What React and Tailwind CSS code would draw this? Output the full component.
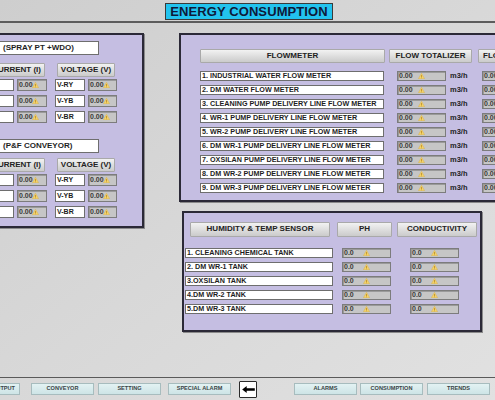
import React from "react";

const font = { fontFamily: '"Liberation Sans", Arial, sans-serif' };

const Warn = ({ className = "" }) => (
  <svg viewBox="0 0 10 9" className={`w-[7px] h-[6px] shrink-0 ${className}`}>
    <polygon points="5,0.5 9.6,8.6 0.4,8.6" fill="#f3d46a" stroke="#d9a93a" strokeWidth="0.6" />
    <rect x="4.5" y="3" width="1" height="3.2" fill="#b07a1a" />
    <rect x="4.5" y="6.8" width="1" height="1" fill="#b07a1a" />
  </svg>
);

const Value = ({ text = "0.00", w = "w-[49px]", gap = "w-[20px]" }) => (
  <div
    className={`${w} h-[10px] shrink-0 flex items-center bg-[#c6c6c6] border border-[#7c7c7c] shadow-[inset_1px_1px_0_#9a9a9a] overflow-hidden`}
  >
    <span className={`${gap} pl-[1px] text-[7px] leading-none font-bold text-[#3a3a3a] shrink-0`}>{text}</span>
    <Warn />
  </div>
);

const Label = ({ children, className = "" }) => (
  <div
    className={`shrink-0 flex items-center bg-white border border-[#6e6e6e] pl-[1px] text-[7.2px] leading-none font-bold text-[#1e1e1e] whitespace-nowrap overflow-hidden ${className}`}
  >
    {children}
  </div>
);

const Head = ({ children, className = "" }) => (
  <div
    className={`shrink-0 flex items-center justify-center bg-gradient-to-b from-[#f2f2f2] to-[#cbcbcb] border border-[#a9a9a9] rounded-[1px] text-[8px] leading-none font-bold text-[#222] whitespace-nowrap overflow-hidden ${className}`}
  >
    {children}
  </div>
);

const panel = "shrink-0 bg-[#c5bee2] border-2 border-[#2b2937] shadow-[1px_1px_0_#8a8a8a]";

function MotorBlock({ title, first }) {
  const rows = [
    ["I-R", "V-RY"],
    ["I-Y", "V-YB"],
    ["I-B", "V-BR"],
  ];
  return (
    <div className={first ? "mt-[6px]" : "mt-[16px]"}>
      <Label className="w-[119px] h-[14px] text-[8px] pl-[22px]">{title}</Label>
      <div className={`flex ${first ? "mt-[8px]" : "mt-[5px]"}`}>
        <Head className="w-[65px] h-[14px] justify-end pr-[3px]">CURRENT (I)</Head>
        <Head className="w-[58px] h-[14px] ml-[12px]">VOLTAGE (V)</Head>
      </div>
      <div className="flex flex-col gap-[4px] mt-[2px]">
        {rows.map(([a, b]) => (
          <div key={b} className="flex items-center h-[12px]">
            <Label className="w-[34px] h-[12px] text-[7px]">{a}</Label>
            <Value w="w-[30px] h-[12px] ml-[3px]" gap="w-[14px]" />
            <Label className="w-[30px] h-[12px] ml-[8px] text-[7px]">{b}</Label>
            <Value w="w-[29px] h-[12px] ml-[3px]" gap="w-[14px]" />
          </div>
        ))}
      </div>
    </div>
  );
}

const flowRows = [
  "1. INDUSTRIAL WATER FLOW METER",
  "2. DM WATER FLOW METER",
  "3. CLEANING PUMP DELIVERY LINE FLOW METER",
  "4. WR-1 PUMP DELIVERY LINE FLOW METER",
  "5. WR-2 PUMP DELIVERY LINE FLOW METER",
  "6. DM WR-1 PUMP DELIVERY LINE FLOW METER",
  "7. OXSILAN PUMP DELIVERY LINE FLOW METER",
  "8. DM WR-2 PUMP DELIVERY LINE FLOW METER",
  "9. DM WR-3 PUMP DELIVERY LINE FLOW METER",
];

const tankRows = [
  "1. CLEANING CHEMICAL TANK",
  "2. DM WR-1 TANK",
  "3.OXSILAN TANK",
  "4.DM WR-2 TANK",
  "5.DM WR-3 TANK",
];

const FootBtn = ({ children, className = "" }) => (
  <div
    className={`shrink-0 h-[12px] flex items-center justify-center bg-gradient-to-b from-[#e3f2f3] to-[#cde4e6] border border-[#a7bcbe] text-[5.6px] leading-none font-bold text-[#3a4446] whitespace-nowrap ${className}`}
  >
    {children}
  </div>
);

export default function App() {
  return (
    <div
      className="w-[495px] h-[400px] overflow-hidden flex flex-col bg-gradient-to-br from-[#cecece] via-[#d8d8d8] to-[#e1e1e1]"
      style={font}
    >
      {/* title */}
      <div className="h-[21px] shrink-0 flex items-start">
        <div className="ml-[165px] mt-[3px] w-[168px] h-[17px] flex items-center justify-center bg-[#22c3ee] border border-[#3a3a3a] text-[13px] leading-none font-bold text-[#0d1a3a] tracking-[0.1px]">
          ENERGY CONSUMPTION
        </div>
      </div>
      <div className="h-[1.5px] shrink-0 bg-[#5c5c5c]" />

      {/* main */}
      <div className="flex items-start mt-[10px]">
        {/* left panel */}
        <div className={`${panel} -ml-[60px] w-[204px] h-[195px] pl-[38px]`}>
          <MotorBlock title="(SPRAY PT +WDO)" first />
          <MotorBlock title="(P&F CONVEYOR)" />
        </div>

        {/* right column */}
        <div className="ml-[35px] flex flex-col shrink-0">
          <div className={`${panel} w-[360px] pl-[19px] pt-[14px] pb-[7px]`}>
            <div className="flex">
              <Head className="w-[185px] h-[14px]">FLOWMETER</Head>
              <Head className="w-[83px] h-[14px] ml-[4px]">FLOW TOTALIZER</Head>
              <Head className="w-[83px] h-[14px] ml-[6px] justify-start pl-[4px]">FLOW RATE</Head>
            </div>
            <div className="flex flex-col gap-[4px] mt-[8px]">
              {flowRows.map((r) => (
                <div key={r} className="flex items-center h-[10px]">
                  <Label className="w-[184px] h-[10px]">{r}</Label>
                  <Value w="w-[49px] ml-[13px]" />
                  <span className="w-[36px] pl-[4px] text-[7.5px] leading-none font-bold text-[#222] shrink-0">m3/h</span>
                  <Value w="w-[49px]" />
                </div>
              ))}
            </div>
          </div>

          <div className={`${panel} ml-[3px] mt-[9px] w-[300px] pt-[9px] pb-[16px]`}>
            <div className="flex ml-[6px]">
              <Head className="w-[140px] h-[15px]">HUMIDITY &amp; TEMP SENSOR</Head>
              <Head className="w-[55px] h-[15px] ml-[7px]">PH</Head>
              <Head className="w-[80px] h-[15px] ml-[5px]">CONDUCTIVITY</Head>
            </div>
            <div className="flex flex-col gap-[4px] mt-[11px] ml-[1px]">
              {tankRows.map((r) => (
                <div key={r} className="flex items-center h-[10px]">
                  <Label className="w-[148px] h-[10px]">{r}</Label>
                  <Value text="0.0" w="w-[49px] ml-[9px]" />
                  <Value text="0.0" w="w-[49px] ml-[19px]" />
                </div>
              ))}
            </div>
          </div>
        </div>
      </div>

      {/* footer */}
      <div className="mt-auto h-[23px] shrink-0 border-t-[1.5px] border-[#5a5a5a] flex items-center">
        <FootBtn className="-ml-[40px] w-[60px] justify-end pr-[4px]">INPUT/OUTPUT</FootBtn>
        <FootBtn className="ml-[11px] w-[63px]">CONVEYOR</FootBtn>
        <FootBtn className="ml-[4px] w-[63px]">SETTING</FootBtn>
        <FootBtn className="ml-[7px] w-[63px]">SPECIAL ALARM</FootBtn>
        <div className="ml-[8px] w-[18px] h-[17px] shrink-0 flex items-center justify-center bg-white border-[1.5px] border-[#2a2a2a] rounded-[1px]">
          <svg viewBox="0 0 14 10" className="w-[13px] h-[9px]">
            <polygon points="0,5 5,1 5,9" fill="#000" />
            <rect x="4" y="3.6" width="10" height="2.8" fill="#000" />
          </svg>
        </div>
        <FootBtn className="ml-[37px] w-[63px]">ALARMS</FootBtn>
        <FootBtn className="ml-[3px] w-[63px]">CONSUMPTION</FootBtn>
        <FootBtn className="ml-[4px] w-[63px]">TRENDS</FootBtn>
      </div>
    </div>
  );
}
